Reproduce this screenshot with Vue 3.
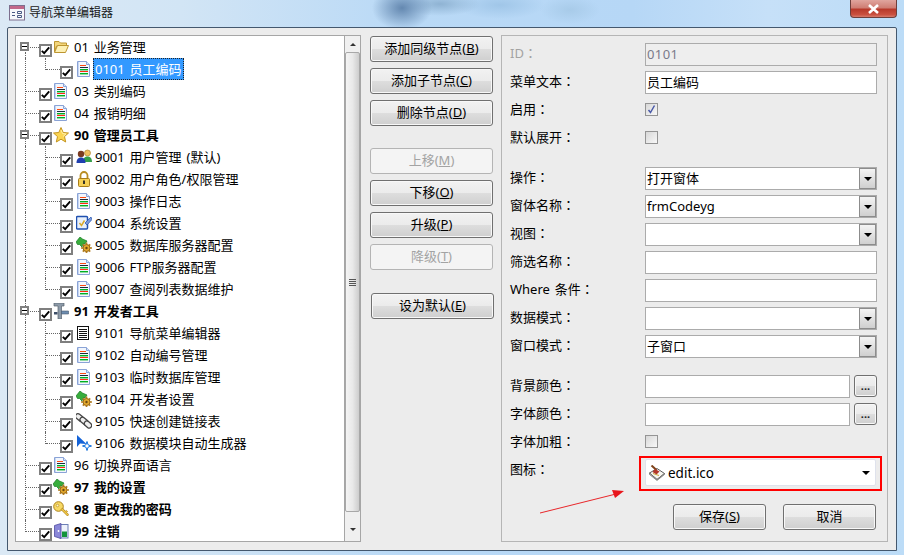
<script setup>
const icons = {
  doc: '<path d="M1.500 .5h9l3 3v12h-12z" fill="#f2f6fd" stroke="#8aa3d6"/><rect x="2" y="1" width="1" height="14" fill="#c6d6f2"/><path d="M10.500 .5v3h3" fill="#d6e2f5" stroke="#8aa3d6"/><rect x="4" y="4" width="6" height="1" fill="#ff4a10"/><rect x="4" y="6" width="8" height="1" fill="#1c2c3c"/><rect x="4" y="8" width="8" height="1.400" fill="#00b020"/><rect x="4" y="10" width="8" height="1" fill="#ff2a10"/><rect x="4" y="12" width="8" height="1.400" fill="#00b020"/>',
  folder: '<path d="M1.500 2.500h4.500l1.500 1.500h6v3h-10l-2 6z" fill="#f3d67c" stroke="#bd9530"/><path d="M1.500 13.500l3-7h11l-3 7z" fill="#fdf0b4" stroke="#bd9530"/>',
  star: '<path d="M8 .5l2.200 5 5.300.5-4 3.600 1.200 5.400L8 12.200 3.300 15l1.200-5.400-4-3.600 5.300-.5z" fill="#fbd552" stroke="#c49520"/><path d="M8 3l1.500 3.500L13 7l-3 2.500" fill="none" stroke="#fff0a8"/>',
  users: '<circle cx="11.500" cy="4" r="3" fill="#f0c060" stroke="#a87a20" stroke-width=".6"/><path d="M7 13c0-4 2-5.500 4.500-5.500S16 9 16 13z" fill="#35a04a"/><circle cx="5" cy="5" r="3.200" fill="#7a3b22"/><path d="M.5 14c0-4 2-5.500 4.500-5.500s4.500 1.500 4.500 5.500z" fill="#2040b0"/>',
  lock: '<path d="M4.500 7.500v-3a3.500 3.500 0 0 1 7 0v3" fill="none" stroke="#b98d22" stroke-width="1.800"/><rect x="2.500" y="7.500" width="11" height="8" rx="1" fill="#f6d055" stroke="#a97c18"/><path d="M8 9.500v3.500" stroke="#222" stroke-width="1.800"/>',
  settings: '<rect x=".5" y="1.500" width="11" height="12.500" rx="1" fill="#e8f0fb" stroke="#1f50b0" stroke-width="1.500"/><path d="M3.500 8l2 2.500 3-5" fill="none" stroke="#d9a92b" stroke-width="1.500"/><path d="M9 8l6-6 1 2.500-5 5.500z" fill="#7a98d8" stroke="#1f50b0" stroke-width=".7"/>',
  gears: '<path d="M0 5l4-5 2.500 2L11 4 9 7H7L6 10 3.500 7.500H1.500z" fill="#38ad3c" stroke="#197a24" stroke-width=".7"/><path d="M10.500 5.500v2.500M10.500 14v2M5 11h2.500M13.500 11h2.500M6.800 7.300l1.500 1.500M12.700 13.200l1.500 1.500M14.200 7.300l-1.500 1.500M8.300 13.200l-1.500 1.500" stroke="#b57f20" stroke-width="1.700"/><circle cx="10.500" cy="11" r="3.500" fill="#e3a82c" stroke="#99691a"/><circle cx="10.500" cy="11" r="1.200" fill="#6d4a12"/>',
  list: '<rect x="1.500" y="1.500" width="11" height="13" fill="#fff" stroke="#111"/><path d="M3 4.500h8M3 6.500h8M3 8.500h8M3 10.500h8M3 12.500h8" stroke="#111"/>',
  tools: '<path d="M1 0h10v3H8.500v13h-3.500V3H1z" fill="#8d9aa8" stroke="#56616d" stroke-width=".7"/><path d="M1 9h3.500v2.500H1z" fill="#3e4f68"/><path d="M8.500 8h7v3h-7z" fill="#6d8db0" stroke="#46596f" stroke-width=".6"/>',
  link: '<g fill="#eee" stroke="#444" stroke-width="1.300"><rect x="-1" y="2" width="9" height="5" rx="2.500" transform="rotate(40 3.500 4.500)"/><rect x="3.500" y="5.500" width="9" height="5" rx="2.500" transform="rotate(40 8 8)"/><rect x="8" y="9" width="8" height="5" rx="2.500" transform="rotate(40 12 11.500)"/></g>',
  arrow: '<path d="M1 0v12l3-3.500 6.500.5z" fill="#1463d8"/><path d="M11 6.500v9M6.500 11h9" stroke="#2a7fe0" stroke-width="2"/><circle cx="11" cy="11" r="2.200" fill="#fff" stroke="#2a7fe0"/>',
  key: '<circle cx="5.500" cy="5.500" r="4.800" fill="#f7d964" stroke="#ad821c"/><circle cx="4.500" cy="4.500" r="1.300" fill="#fff6c8" stroke="#ad821c" stroke-width=".6"/><path d="M8 8.500l6.500 6.500 1.200-1.500-2-2 .8-1-1.300-1-1 .8L9.500 7z" fill="#f1c843" stroke="#ad821c" stroke-width=".8"/>',
  door: '<rect x="7" y="1.500" width="8" height="13.500" fill="#eef2fb" stroke="#6c7fb5"/><rect x="9" y="8.500" width="5" height="5.500" fill="#14933a"/><path d="M1.500 2.500L8 .5v15l-6.500-2z" fill="#8a87d8" stroke="#4e4a9f" stroke-width=".8"/><circle cx="5.500" cy="8" r=".9" fill="#fff"/>',
  edit: '<path d="M.5 8l7.500-4.500 7.500 5-7.500 6z" fill="#f6f5ef" stroke="#5e5e5e"/><path d="M.5 8v1.500l7.500 6 7.500-6V8.500L8 14.500z" fill="#bdbbb3" stroke="#5e5e5e" stroke-width=".6"/><path d="M2.500 .5l5 4.500" stroke="#7e431b" stroke-width="2"/><path d="M6 4l4.500 2.500-3 3-4-2.500z" fill="#b3372a"/><path d="M4 8.500l6 2" stroke="#c9a23a"/>'
}

const rows = [
  { d: 0, icon: 'folder', text: '01 业务管理', exp: true, first: true },
  { d: 1, icon: 'doc', text: '0101 员工编码', sel: true, lastChild: true },
  { d: 0, icon: 'doc', text: '03 类别编码' },
  { d: 0, icon: 'doc', text: '04 报销明细' },
  { d: 0, icon: 'star', text: '90 管理员工具', bold: true, exp: true },
  { d: 1, icon: 'users', text: '9001 用户管理 (默认)' },
  { d: 1, icon: 'lock', text: '9002 用户角色/权限管理' },
  { d: 1, icon: 'doc', text: '9003 操作日志' },
  { d: 1, icon: 'settings', text: '9004 系统设置' },
  { d: 1, icon: 'gears', text: '9005 数据库服务器配置' },
  { d: 1, icon: 'doc', text: '9006 FTP服务器配置' },
  { d: 1, icon: 'doc', text: '9007 查阅列表数据维护', lastChild: true },
  { d: 0, icon: 'tools', text: '91 开发者工具', bold: true, exp: true },
  { d: 1, icon: 'list', text: '9101 导航菜单编辑器' },
  { d: 1, icon: 'doc', text: '9102 自动编号管理' },
  { d: 1, icon: 'doc', text: '9103 临时数据库管理' },
  { d: 1, icon: 'gears', text: '9104 开发者设置' },
  { d: 1, icon: 'link', text: '9105 快速创建链接表' },
  { d: 1, icon: 'arrow', text: '9106 数据模块自动生成器', lastChild: true },
  { d: 0, icon: 'doc', text: '96 切换界面语言' },
  { d: 0, icon: 'gears', text: '97 我的设置', bold: true },
  { d: 0, icon: 'key', text: '98 更改我的密码', bold: true },
  { d: 0, icon: 'door', text: '99 注销', bold: true, last: true }
]

const buttons = [
  { t: '添加同级节点(', k: 'B' },
  { t: '添加子节点(', k: 'C' },
  { t: '删除节点(', k: 'D', gapAfter: true },
  { t: '上移(', k: 'M', off: true },
  { t: '下移(', k: 'O' },
  { t: '升级(', k: 'P' },
  { t: '降级(', k: 'T', off: true, gapAfter: true },
  { t: '设为默认(', k: 'E', shift: true }
]

const fields = [
  { label: 'ID', kind: 'text', value: '0101', off: true },
  { label: '菜单文本', kind: 'text', value: '员工编码' },
  { label: '启用', kind: 'check', on: true },
  { label: '默认展开', kind: 'check', gapAfter: true },
  { label: '操作', kind: 'select', value: '打开窗体' },
  { label: '窗体名称', kind: 'select', value: 'frmCodeyg' },
  { label: '视图', kind: 'select', value: '' },
  { label: '筛选名称', kind: 'text', value: '' },
  { label: 'Where 条件', kind: 'text', value: '' },
  { label: '数据模式', kind: 'select', value: '' },
  { label: '窗口模式', kind: 'select', value: '子窗口', gapAfter: true },
  { label: '背景颜色', kind: 'color' },
  { label: '字体颜色', kind: 'color' },
  { label: '字体加粗', kind: 'check' }
]
</script>

<template>
  <div class="window">
    <header class="titlebar">
      <svg class="title-icon" width="16" height="16" viewBox="0 0 16 16">
        <rect x=".5" y=".5" width="15" height="14.500" fill="#f6f7fb" stroke="#7d6f8e" />
        <rect x="1" y="1" width="14" height="3" fill="#c2688a" />
        <path d="M3 7.500h3M3 10.500h3M8.500 6.500h4v2h-4zM8.500 10.500h4v2h-4z" fill="none" stroke="#4a5a85" />
      </svg>
      <span class="title-text">导航菜单编辑器</span>
      <button class="close" type="button" aria-label="关闭">
        <svg width="13" height="10" viewBox="0 0 13 10">
          <path d="M2 1l9 8M11 1l-9 8" stroke="#fff" stroke-width="2.600" />
        </svg>
      </button>
    </header>

    <main class="client">
      <section class="tree-panel">
        <ul class="tree">
          <li v-for="r in rows" :key="r.text" class="row" :class="'depth' + r.d">
            <i class="guide v0" :class="{ first: r.first, last: r.last }"></i>
            <i v-if="r.d === 1" class="guide v1" :class="{ last: r.lastChild }"></i>
            <i class="guide h"></i>
            <span v-if="r.exp" class="expander"></span>
            <span class="tree-check">
              <svg width="9" height="9" viewBox="0 0 9 9"><path d="M.8 4.800l2.400 2.400 5-5.800" fill="none" stroke="#000" stroke-width="1.900" /></svg>
            </span>
            <svg class="node-icon" width="16" height="16" viewBox="0 0 16 16" v-html="icons[r.icon]"></svg>
            <span class="node-text" :class="{ bold: r.bold, selected: r.sel }">{{ r.text }}</span>
          </li>
        </ul>
        <div class="scrollbar">
          <span class="sb-arrow up"></span>
          <div class="thumb"><span class="grip"></span></div>
          <span class="sb-arrow down"></span>
        </div>
      </section>

      <nav class="actions">
        <button v-for="b in buttons" :key="b.k" type="button" class="btn action"
          :class="{ off: b.off, 'gap-after': b.gapAfter, shift: b.shift }">{{ b.t }}<u>{{ b.k }}</u>)</button>
      </nav>

      <section class="form">
        <div v-for="f in fields" :key="f.label" class="field" :class="{ 'gap-after': f.gapAfter }">
          <label class="label" :class="{ dim: f.off }">{{ f.label }}<span class="colon">：</span></label>
          <div v-if="f.kind === 'text'" class="input" :class="{ off: f.off }">{{ f.value }}</div>
          <span v-else-if="f.kind === 'check'" class="check">
            <svg v-if="f.on" width="11" height="11" viewBox="0 0 11 11"><path d="M2.500 6l2 2.500 4-7" fill="none" stroke="#4a5aa8" stroke-width="1.500" /></svg>
          </span>
          <div v-else-if="f.kind === 'select'" class="input select">
            <span>{{ f.value }}</span>
            <span class="drop"><i class="tri"></i></span>
          </div>
          <div v-else class="color-row">
            <div class="input grow"></div>
            <button type="button" class="btn dots">...</button>
          </div>
        </div>

        <div class="field">
          <label class="label">图标<span class="colon">：</span></label>
          <div class="combo">
            <svg width="16" height="16" viewBox="0 0 16 16" v-html="icons.edit"></svg>
            <span class="combo-text">edit.ico</span>
            <i class="tri"></i>
            <span class="highlight"></span>
          </div>
        </div>

        <div class="form-actions">
          <button type="button" class="btn">保存(<u>S</u>)</button>
          <button type="button" class="btn">取消</button>
        </div>

        <svg class="pointer" width="90" height="26" viewBox="0 0 90 26">
          <path d="M0 24L76 5" stroke="#e8262a" stroke-width="1" fill="none" />
          <path d="M84 2l-12 -1 3 8z" fill="#e8161c" />
        </svg>
      </section>
    </main>
  </div>
</template>

<style scoped>
.window {
  position: relative;
  width: 904px;
  height: 555px;
  overflow: hidden;
  box-sizing: border-box;
  display: flex;
  flex-direction: column;
  font: 13px/1.2 "Noto Sans", "Noto Sans CJK SC", sans-serif;
  color: #000;
  background:
    radial-gradient(ellipse 30px 22px at 402px 8px, #6488b0 0%, rgba(100,136,176,0) 100%),
    radial-gradient(ellipse 40px 12px at 440px 4px, #8fb3d3 0%, rgba(143,179,211,0) 100%),
    radial-gradient(ellipse 45px 14px at 500px 5px, #a0c6e8 0%, rgba(160,198,232,0) 100%),
    radial-gradient(ellipse 30px 14px at 570px 10px, #a8cbe9 0%, rgba(168,203,233,0) 100%),
    linear-gradient(90deg, #dbe9f5 0%, #d2e5f5 20%, #b9d9f6 45%, #b6d7f6 70%, #c6e0f8 85%, #bcdcf7 100%);
}
.titlebar {
  position: relative;
  flex: 0 0 27px;
  display: flex;
  align-items: center;
  padding-left: 9px;
}
.title-icon { flex: none; margin-top: -1px; }
.title-text { margin-left: 4px; color: #1a1a1a; font-size: 12px; }
.close {
  position: absolute;
  top: 0;
  right: 7px;
  width: 47px;
  height: 18px;
  padding: 0;
  display: flex;
  align-items: center;
  justify-content: center;
  border: 1px solid #6d3f3c;
  border-top: 0;
  border-radius: 0 0 4px 4px;
  background: linear-gradient(#e0a59e 0%, #cf7e74 45%, #b8392b 55%, #c9503f 85%, #d77a6b 100%);
}
.client {
  flex: 1;
  display: flex;
  align-items: flex-start;
  margin: 0 7px 4px;
  padding: 7px 0 0 7px;
  box-sizing: border-box;
  background: #ececec;
  border: 1px solid #44586e;
  border-radius: 2px 2px 0 0;
}
.tree-panel {
  flex: 0 0 346px;
  height: 507px;
  display: flex;
  box-sizing: border-box;
  border: 1px solid #a6a6a6;
  background: #fff;
}
.tree {
  flex: 1;
  margin: 0;
  padding: 0;
  list-style: none;
  overflow: hidden;
}
.row {
  position: relative;
  display: flex;
  align-items: flex-start;
  height: 22px;
  white-space: nowrap;
}
.depth0 { padding-left: 23px; }
.depth1 { padding-left: 44px; }
.guide { position: absolute; display: block; }
.v0, .v1 {
  top: 0;
  bottom: 0;
  border-left: 1px dotted #666;
}
.v0 { left: 9px; }
.v1 { left: 29px; }
.v0.first { top: 16px; }
.v0.last, .v1.last { bottom: 10px; }
.h {
  top: 11px;
  height: 0;
  border-top: 1px dotted #666;
}
.depth0 .h { left: 10px; width: 13px; }
.depth1 .h { left: 30px; width: 14px; }
.expander {
  position: absolute;
  left: 4px;
  top: 6px;
  width: 9px;
  height: 9px;
  box-sizing: border-box;
  border: 2px solid #808080;
  background: linear-gradient(#000, #000) center / 5px 1px no-repeat #fff;
  z-index: 1;
}
.tree-check {
  flex: none;
  width: 13px;
  height: 13px;
  margin-top: 8px;
  box-sizing: border-box;
  border: 2px solid #7f7f7f;
  background: #fff;
  display: flex;
  align-items: center;
  justify-content: center;
  z-index: 1;
}
.node-icon {
  flex: none;
  margin: 3px 0 0 1px;
  z-index: 1;
}
.depth1 .node-icon { margin-left: 3px; }
.node-text {
  margin-left: 3px;
  padding: 0 2px;
  height: 22px;
  line-height: 23px;
  word-spacing: 1.500px;
  z-index: 1;
}
.depth1 .node-text { margin-left: 1px; }
.bold { font-weight: 700; }
.selected {
  background: #3399ff;
  color: #fff;
  outline: 1px dotted #222;
  outline-offset: -1px;
}
.scrollbar {
  flex: 0 0 15px;
  display: flex;
  flex-direction: column;
  align-items: center;
  background: #f0f0f0;
  border-left: 1px solid #a6a6a6;
}
.sb-arrow {
  flex: none;
  width: 0;
  height: 0;
  border-left: 3px solid transparent;
  border-right: 3px solid transparent;
}
.sb-arrow.up { margin: 7px 0 6px; border-bottom: 3px solid #333; }
.sb-arrow.down { margin: 16px 0 0; border-top: 3px solid #333; }
.thumb {
  flex: none;
  width: 15px;
  height: 460px;
  display: flex;
  align-items: center;
  justify-content: center;
  box-sizing: border-box;
  border: 1px solid #a8a8a8;
  border-radius: 2px;
  background: linear-gradient(90deg, #f4f4f4, #e9e9e9 50%, #cdcdcd);
}
.grip {
  width: 7px;
  height: 7px;
  background: repeating-linear-gradient(#555 0 1px, transparent 1px 2px);
}
.actions {
  flex: 0 0 123px;
  display: flex;
  flex-direction: column;
  gap: 6px;
  margin: 1px 8px 0 9px;
}
.btn {
  height: 26px;
  padding: 0;
  box-sizing: border-box;
  border: 1px solid #707070;
  border-radius: 3px;
  font: inherit;
  color: #000;
  background: linear-gradient(#f2f2f2 0%, #ebebeb 50%, #dddddd 52%, #cfcfcf 100%);
  box-shadow: inset 0 0 0 1px #f8f8f8;
}
.btn.off {
  color: #a3a3a3;
  border-color: #b4b4b4;
  background: #f4f4f4;
  box-shadow: none;
}
.action.gap-after { margin-bottom: 16px; }
.action.shift { margin: 1px -1px 0 1px; }
.form {
  position: relative;
  flex: 0 0 387px;
  height: 507px;
  box-sizing: border-box;
  padding: 3px 0 0 8px;
  border: 1px solid #b5b5b5;
}
.field {
  display: flex;
  align-items: flex-start;
  height: 28px;
  width: 367px;
}
.field.gap-after { margin-bottom: 12px; }
.label {
  flex: 0 0 135px;
  line-height: 28px;
  word-spacing: 1.500px;
}
.colon { font-family: "Noto Sans CJK TC", sans-serif; }
.label.dim { color: #a3a3a3; }
.input {
  flex: 0 0 232px;
  height: 23px;
  margin-top: 4px;
  padding-left: 1px;
  box-sizing: border-box;
  border: 1px solid #ababab;
  background: #fff;
  line-height: 20px;
  position: relative;
}
.input.off {
  color: #7a7a8a;
  background: #eeeeee;
  letter-spacing: .4px;
}
.check {
  flex: none;
  width: 13px;
  height: 13px;
  margin-top: 8px;
  box-sizing: border-box;
  border: 1px solid #949494;
  background: linear-gradient(135deg, #d8d8d8, #f8f8f8);
  display: flex;
  align-items: center;
  justify-content: center;
}
.drop {
  position: absolute;
  top: 0;
  right: 0;
  bottom: 0;
  width: 17px;
  display: flex;
  align-items: center;
  justify-content: center;
  box-sizing: border-box;
  border: 1px solid #8c8c8c;
  background: linear-gradient(#f4f4f4, #cfcfcf);
}
.tri {
  display: block;
  width: 0;
  height: 0;
  border-left: 4px solid transparent;
  border-right: 4px solid transparent;
  border-top: 4px solid #000;
}
.color-row {
  flex: 0 0 232px;
  display: flex;
  gap: 4px;
}
.grow { flex: 1; }
.dots {
  flex: 0 0 23px;
  height: 22px;
  margin-top: 4px;
  line-height: 14px;
  font-weight: 700;
  font-size: 11px;
  color: #222;
}
.combo {
  position: relative;
  flex: 0 0 231px;
  height: 27px;
  margin-top: 4px;
  display: flex;
  align-items: center;
  padding: 0 5px 0 3px;
  box-sizing: border-box;
  border: 1px solid #dfe2ec;
  border-radius: 2px;
  background: #fff;
}
.combo svg { flex: none; }
.combo-text { flex: 1; margin: 1px 0 0 3px; font-size: 13.500px; }
.highlight {
  position: absolute;
  inset: -4px -7px -6px -7px;
  border: 2px solid #ff0000;
  pointer-events: none;
}
.form-actions {
  display: flex;
  gap: 17px;
  margin: 21px 0 0 163px;
}
.form-actions .btn { width: 93px; }
.pointer {
  position: absolute;
  left: 38px;
  top: 453px;
}
u { text-underline-offset: 1px; }
</style>
